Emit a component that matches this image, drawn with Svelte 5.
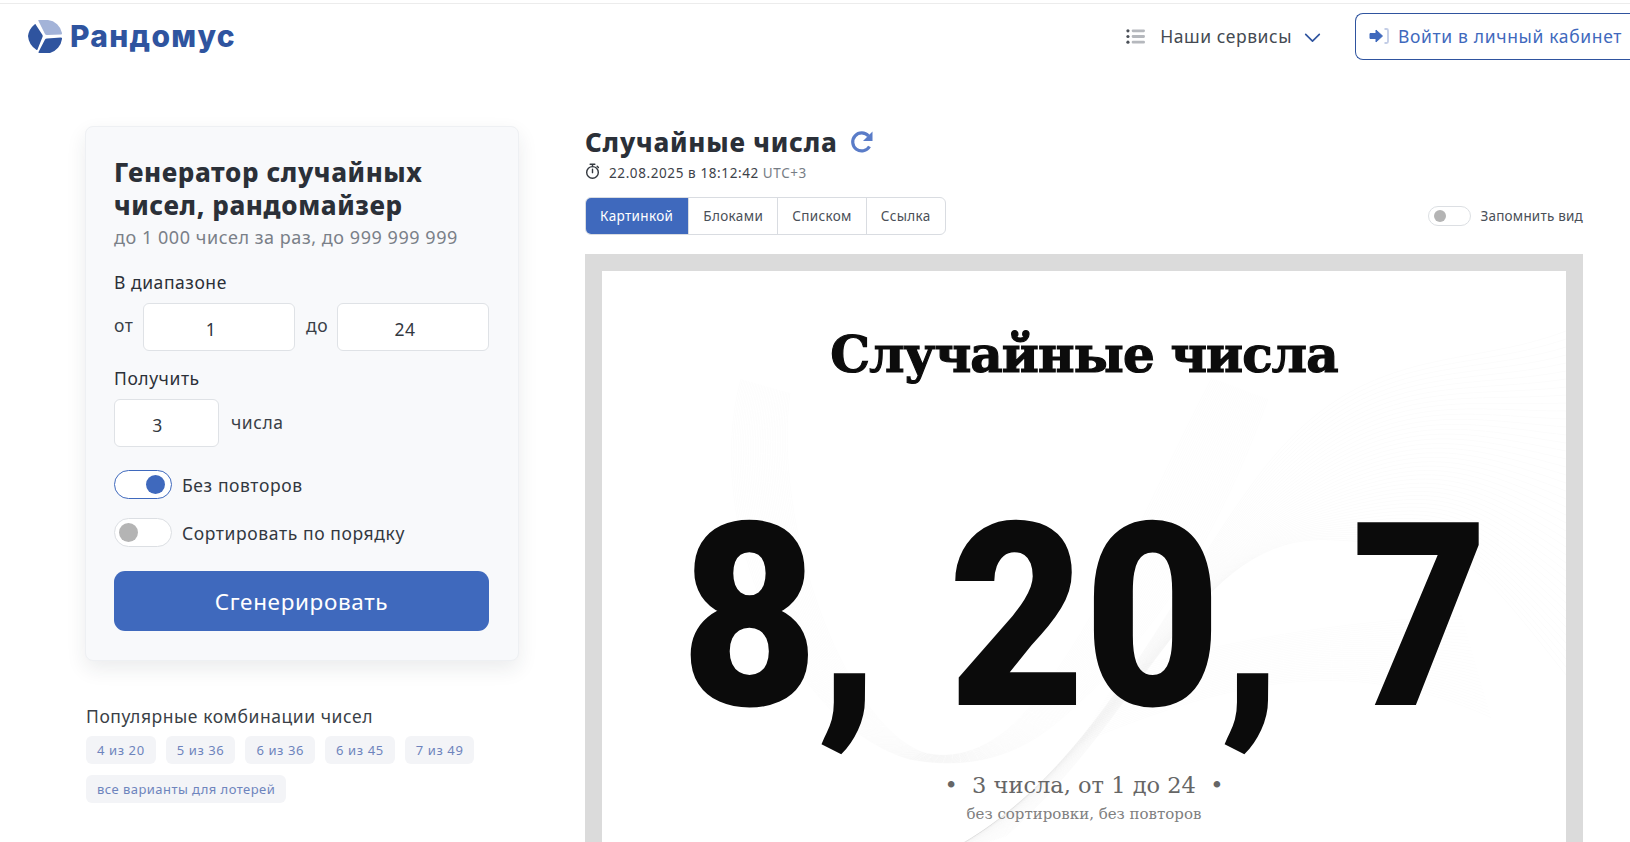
<script>
  // Faint guilloche ribbons behind the picture card, generated as families of offset curves.
  const main = [];
  for (let i = 0; i < 34; i++) {
    const t = i / 33;
    const a = 70 * t;
    main.push(`M${610 + a * 0.8} ${107 + a * 0.3} C ${560 + a} ${200 + a * 0.4}, ${500 + a} ${350 + a * 0.1}, ${425 + a * 0.4} ${439 + a * 0.2} C ${390 + a * 0.2} ${480 + a * 0.2}, ${350} ${490 + a * 0.1}, ${320 - a * 0.2} ${481 + a * 0.1} C ${240 - a * 0.8} ${450}, ${170 - a} ${250}, ${188 - a * 0.7} ${122 - a * 0.2}`);
  }
  const right = [];
  for (let i = 0; i < 44; i++) {
    const t = i * 8;
    right.push(`M${300 + t * 0.3} ${600 - t * 0.1} C ${480 + t * 0.2} ${540 - t * 0.3}, ${560 + t * 0.1} ${330 - t * 0.2}, ${660 + t * 0.2} ${200 + t * 0.2} S ${860} ${100 + t * 0.5}, ${964} ${60 + t}`);
  }
  const flat = [];
  for (let i = 0; i < 30; i++) {
    const t = i * 5;
    flat.push(`M${520 - t * 0.3} ${400 + t * 0.5} C ${620} ${370 + t * 0.3}, ${740} ${350 + t * 0.2}, ${860 + t * 0.2} ${345 + t * 0.7}`);
  }
  const chips = ['4 из 20', '5 из 36', '6 из 36', '6 из 45', '7 из 49'];
  const tabs = ['Картинкой', 'Блоками', 'Списком', 'Ссылка'];
</script>

<div class="page">
  <header class="header">
    <div class="logo">
      <svg class="logo-mark" viewBox="0 0 36 36" aria-hidden="true">
        <path fill="#a3b3d8" d="M11.500 3Q10.500 2 12 2L21 2A16 16 0 0 1 35 15Q35.300 16.500 34 16.500L20 17Q18.500 17 18 16Z"/>
        <path fill="#2f549f" d="M7.500 6.500Q8.500 5.500 9 7L15.500 17Q16 18 15.500 19L10.500 31.500Q10 32.500 9 31.500A18 18 0 0 1 1 18A18 18 0 0 1 7.500 6.500Z"/>
        <path fill="#2f549f" d="M34 19.500Q35.500 19.500 35 21A17 17 0 0 1 23 35L12.500 35Q11 35 11.500 34L18 21.500Q18.500 20.500 20 20.500Z"/>
      </svg>
      <span class="logo-text">Рандомус</span>
    </div>
    <nav class="nav">
      <svg class="list-ico" viewBox="0 0 20 18" aria-hidden="true">
        <circle cx="2" cy="3" r="1.700" fill="#4a4f57"/><circle cx="2" cy="9" r="1.700" fill="#4a4f57"/><circle cx="2" cy="15" r="1.700" fill="#4a4f57"/>
        <rect x="6" y="1.500" width="14" height="3" rx="1.200" fill="#b5b8bd"/><rect x="6" y="7.500" width="14" height="3" rx="1.200" fill="#b5b8bd"/><rect x="6" y="13.500" width="14" height="3" rx="1.200" fill="#b5b8bd"/>
      </svg>
      <span class="nav-label">Наши сервисы</span>
      <svg class="chev" viewBox="0 0 18 11" aria-hidden="true"><path d="M1.500 1.500 9 9l7.500-7.500" fill="none" stroke="#2f549f" stroke-width="1.800" stroke-linecap="round" stroke-linejoin="round"/></svg>
      <a class="login">
        <svg class="login-ico" viewBox="0 0 20 16" aria-hidden="true">
          <path fill="#3f69bd" stroke="#3f69bd" stroke-width="1" stroke-linejoin="round" d="M1 5.500h6V2l6.500 6L7 14v-3.500H1z"/>
          <path fill="none" stroke="#c3cde6" stroke-width="1.800" d="M15.500 1h2q1.500 0 1.500 1.500v11q0 1.500-1.500 1.500h-2"/>
        </svg>
        Войти в личный кабинет
      </a>
    </nav>
  </header>

  <main class="main">
    <aside class="side">
      <section class="card">
        <h1>Генератор случайных<br>чисел, рандомайзер</h1>
        <p class="limits">до 1 000 чисел за раз, до 999 999 999</p>
        <div class="label">В диапазоне</div>
        <div class="row range">
          <span class="from">от</span><div class="input">1</div>
          <span class="to">до</span><div class="input">24</div>
        </div>
        <div class="label second">Получить</div>
        <div class="row count">
          <div class="input small">3</div><span class="unit">числа</span>
        </div>
        <div class="check first"><span class="toggle on"><i></i></span>Без повторов</div>
        <div class="check"><span class="toggle"><i></i></span>Сортировать по порядку</div>
        <button class="go">Сгенерировать</button>
      </section>
      <div class="popular">
        <div class="pop-title">Популярные комбинации чисел</div>
        <div class="chips">
          {#each chips as c}<span class="chip">{c}</span>{/each}
          <span class="chip">все варианты для лотерей</span>
        </div>
      </div>
    </aside>

    <section class="result">
      <div class="title-row">
        <h2>Случайные числа</h2>
        <svg class="refresh" viewBox="0 0 24 24" aria-hidden="true">
          <path fill="none" stroke="#5a7cc8" stroke-width="3.200" d="M19.500 16.500A9 9 0 1 1 18.500 6"/>
          <path fill="#5a7cc8" d="M22.500 1.500v9.500H13z"/>
        </svg>
      </div>
      <div class="date">
        <svg class="timer" viewBox="0 0 16 18" aria-hidden="true">
          <circle cx="8" cy="10" r="6.200" fill="none" stroke="#33383f" stroke-width="1.500"/>
          <path d="M5.500 1.200h5M8 1.200v2.500M8 6.500v3.700M13 3.500l1.300 1.300" fill="none" stroke="#33383f" stroke-width="1.500" stroke-linecap="round"/>
        </svg>
        <span class="stamp">22.08.2025 в 18:12:42</span> <span class="tz">UTC+3</span>
      </div>
      <div class="bar">
        <div class="tabs">
          {#each tabs as t, i}<span class="tab" class:active={i === 0}>{t}</span>{/each}
        </div>
        <div class="remember"><span class="toggle mini"><i></i></span>Запомнить вид</div>
      </div>
      <div class="frame">
        <div class="sheet">
          <svg class="waves" viewBox="0 0 964 571" aria-hidden="true">
            {#each main as d}<path {d} fill="none" stroke="#000" stroke-opacity="0.02" stroke-width="0.800"/>{/each}
            {#each right as d}<path {d} fill="none" stroke="#000" stroke-opacity="0.022" stroke-width="0.700"/>{/each}
            {#each flat as d}<path {d} fill="none" stroke="#000" stroke-opacity="0.02" stroke-width="0.700"/>{/each}
          </svg>
          <div class="sheet-title">Случайные числа</div>
          <div class="numbers">8, 20, 7</div>
          <div class="meta">•&nbsp; 3 числа, от 1 до 24 &nbsp;•</div>
          <div class="meta2">без сортировки, без повторов</div>
        </div>
      </div>
    </section>
  </main>
</div>

<style>
  :global(html), :global(body) { margin: 0; height: 842px; overflow: hidden; background: #fff; }
  .page { font-family: "Noto Sans", "Open Sans", sans-serif; color: #2b3038; height: 842px; overflow: hidden; border-top: 1px solid transparent; }
  .header { margin-top: 2px; border-top: 1px solid #ececec; height: 70px; display: flex; align-items: center; justify-content: space-between; padding-left: 27px; box-sizing: border-box; }
  .logo { display: flex; align-items: center; gap: 7px; margin-top: -5px; }
  .logo-mark { width: 36px; height: 36px; }
  .logo-text { font-family: Inter, sans-serif; font-weight: 800; font-size: 30px; color: #2f549f; letter-spacing: 1.300px; }
  .nav { display: flex; align-items: center; margin-top: -5px; }
  .list-ico { width: 19px; height: 17px; margin-right: 15px; }
  .nav-label { font-size: 17.500px; letter-spacing: .55px; color: #444a52; white-space: nowrap; }
  .chev { width: 17px; height: 10px; margin: 4px 34px 0 12px; }
  .login { display: flex; align-items: center; gap: 9px; height: 47px; width: 275px; box-sizing: border-box; border: 1px solid #2f549f; border-right: 0; border-radius: 8px 0 0 8px; padding-left: 13px; font-size: 17.500px; letter-spacing: .65px; color: #3f69bd; white-space: nowrap; }
  .login-ico { width: 20px; height: 16px; flex: none; }

  .main { display: flex; align-items: flex-start; padding: 53px 47px 0 85px; }
  .side { width: 434px; flex: none; margin-right: 66px; }
  .card { box-sizing: border-box; height: 535px; background: #f8f9fb; border: 1px solid #eef0f3; border-radius: 8px; box-shadow: 0 8px 20px rgba(30, 40, 60, .09); padding: 29px 28px 0; }
  h1 { margin: 0; font-size: 26px; line-height: 33px; font-weight: 800; color: #2b3038; letter-spacing: .6px; white-space: nowrap; }
  .limits { margin: 3px 0 0; font-size: 18px; line-height: 24px; letter-spacing: .55px; color: #7a8088; white-space: nowrap; }
  .label { margin-top: 21px; font-size: 17.500px; letter-spacing: .55px; line-height: 24px; }
  .label.second { margin-top: 15px; }
  .row { display: flex; align-items: center; font-size: 17.500px; letter-spacing: .55px; color: #3a3f47; }
  .range { margin-top: 9px; }
  .from { width: 29px; flex: none; padding-bottom: 4px; }
  .to { width: 31px; padding: 0 0 4px 11px; flex: none; }
  .count { margin-top: 9px; gap: 12px; }
  .unit { padding-bottom: 2px; }
  .input { box-sizing: border-box; width: 152px; height: 48px; flex: none; background: #fff; border: 1px solid #dfe2e6; border-radius: 6px; display: flex; align-items: center; justify-content: center; padding: 3px 16px 0 0; font-size: 17.500px; color: #33383f; }
  .input.small { width: 105px; padding-right: 18px; }
  .check { display: flex; align-items: center; gap: 10px; margin-top: 19px; font-size: 17.500px; letter-spacing: .6px; color: #33383f; }
  .check.first { margin-top: 23px; }
  .toggle { display: block; position: relative; box-sizing: border-box; width: 58px; height: 29px; border: 1px solid #dcdfe3; border-radius: 15px; background: #fff; flex: none; }
  .toggle i { position: absolute; left: 4px; top: 4px; width: 19px; height: 19px; border-radius: 50%; background: #b4b4b4; }
  .toggle.on { border-color: #3f69bd; }
  .toggle.on i { left: auto; right: 6px; background: #3f69bd; }
  .go { display: block; width: 375px; height: 60px; margin-top: 24px; border: 0; border-radius: 11px; background: #3f69bd; color: #fff; font-family: inherit; font-size: 22.500px; letter-spacing: .65px; }
  .popular { margin-top: 43px; }
  .pop-title { font-size: 17.500px; letter-spacing: .55px; line-height: 24px; color: #3a3f47; margin-left: 1px; }
  .chips { display: flex; flex-wrap: wrap; gap: 11px 10px; margin: 8px 0 0 1px; width: 420px; }
  .chip { box-sizing: border-box; height: 28px; padding: 0 11px; display: flex; align-items: center; border-radius: 6px; background: #f3f4f7; color: #6e84bd; font-size: 13px; letter-spacing: .6px; }
  .chip:last-child { letter-spacing: .45px; }

  .result { width: 998px; flex: none; }
  .title-row { display: flex; align-items: center; gap: 12px; height: 34px; margin-top: -1px; }
  h2 { margin: 0; font-size: 26px; line-height: 34px; font-weight: 800; color: #2b3038; letter-spacing: .8px; }
  .refresh { width: 24px; height: 24px; margin-top: -1px; }
  .date { display: flex; align-items: center; font-size: 13.500px; letter-spacing: .6px; line-height: 20px; height: 20px; margin-top: 4px; color: #3d4249; }
  .timer { width: 15px; height: 17px; margin-right: 9px; margin-top: -3px; }
  .tz { color: #777d85; margin-left: 4px; }
  .bar { display: flex; align-items: center; justify-content: space-between; margin-top: 14px; }
  .tabs { display: flex; height: 38px; box-sizing: border-box; border: 1px solid #d9dce1; border-radius: 6px; overflow: hidden; }
  .tab { display: flex; align-items: center; padding: 0 14px; font-size: 13.500px; letter-spacing: .35px; color: #4a4f57; border-left: 1px solid #d9dce1; }
  .tab:first-child { border-left: 0; }
  .tab.active { background: #3f69bd; color: #fff; margin: -1px 0 -1px -1px; padding: 0 15px; }
  .remember { display: flex; align-items: center; gap: 10px; font-size: 13.500px; letter-spacing: .2px; color: #4a4f57; }
  .toggle.mini { width: 43px; height: 20px; }
  .toggle.mini i { left: 5px; top: 3px; width: 12px; height: 12px; }
  .frame { margin-top: 19px; border: 17px solid #dbdbdb; border-bottom: 0; height: 600px; box-sizing: border-box; }
  .sheet { position: relative; background: #fff; height: 600px; text-align: center; overflow: hidden; }
  .waves { position: absolute; left: 0; top: 0; width: 964px; height: 571px; }
  .sheet-title { position: relative; font-family: "DejaVu Serif", serif; font-weight: 700; font-size: 50px; line-height: 60px; padding-top: 54px; color: #0c0c0c; letter-spacing: -.9px; -webkit-text-stroke: 1.200px #0c0c0c; }
  .numbers { position: relative; font-family: Roboto, sans-serif; font-weight: 900; font-size: 257px; line-height: 300px; margin-top: 83px; color: #0b0b0b; white-space: nowrap; letter-spacing: -1.500px; word-spacing: 13px; transform: scaleX(.92); }
  .meta { position: relative; font-family: "DejaVu Serif", serif; font-size: 22.500px; line-height: 30px; color: #666; margin-top: 2px; }
  .meta2 { position: relative; font-family: "DejaVu Serif", serif; font-size: 15px; line-height: 20px; color: #808080; margin-top: 4px; }
</style>
